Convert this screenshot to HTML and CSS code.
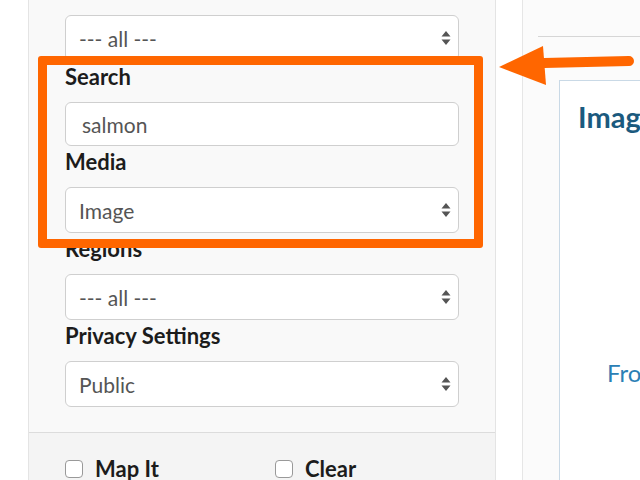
FILE: index.html
```html
<!DOCTYPE html>
<html lang="en">
<head>
  <meta charset="UTF-8" />
  <meta name="viewport" content="width=device-width, initial-scale=1" />
  <title>Filter Observations</title>
  <link rel="stylesheet" href="styles.css">
</head>
<body>

  <div class="page">
    <div class="gutter"></div>

    <aside class="filters">
      <div class="filter-fields">
        <div class="select-wrap">
          <select class="field"><option>--- all ---</option></select>
          <svg class="updown" width="10" height="16" viewBox="0 0 10 16"><path d="M5 1 L9.5 6.5 H0.5 Z M5 15 L9.5 9.5 H0.5 Z" fill="#555"/></svg>
        </div>

        <label for="search">Search</label>
        <input type="text" id="search" class="field" value="salmon" />

        <label for="media">Media</label>
        <div class="select-wrap">
          <select id="media" class="field"><option>Image</option></select>
          <svg class="updown" width="10" height="16" viewBox="0 0 10 16"><path d="M5 1 L9.5 6.5 H0.5 Z M5 15 L9.5 9.5 H0.5 Z" fill="#555"/></svg>
        </div>

        <label for="regions">Regions</label>
        <div class="select-wrap">
          <select id="regions" class="field"><option>--- all ---</option></select>
          <svg class="updown" width="10" height="16" viewBox="0 0 10 16"><path d="M5 1 L9.5 6.5 H0.5 Z M5 15 L9.5 9.5 H0.5 Z" fill="#555"/></svg>
        </div>

        <label for="privacy">Privacy Settings</label>
        <div class="select-wrap">
          <select id="privacy" class="field"><option>Public</option></select>
          <svg class="updown" width="10" height="16" viewBox="0 0 10 16"><path d="M5 1 L9.5 6.5 H0.5 Z M5 15 L9.5 9.5 H0.5 Z" fill="#555"/></svg>
        </div>
      </div>

      <div class="filter-actions">
        <label class="check"><input type="checkbox" /> Map It</label>
        <label class="check"><input type="checkbox" /> Clear</label>
      </div>

      <div class="highlight"></div>
    </aside>

    <div class="spacer"></div>

    <main class="results">
      <div class="results-rule"></div>
      <div class="result-card">
        <h3>Images</h3>
        <p class="from">From</p>
      </div>
    </main>

    <svg class="pointer" width="140" height="50" viewBox="0 0 140 50">
      <line x1="45" y1="18" x2="130" y2="16" stroke="#ff6600" stroke-width="10" stroke-linecap="round"/>
      <polygon points="0,22 44,1 47,40" fill="#ff6600"/>
    </svg>
  </div>

</body>
</html>
```

FILE: styles.css
```css
body {
  margin: 0;
  font-family: Lato, "Open Sans", sans-serif;
  background: #fff;
  color: #222;
}
.page {
  display: flex;
  height: 480px;
  overflow: hidden;
  position: relative;
}
.gutter {
  width: 28px;
  flex: none;
}
.filters {
  width: 466px;
  flex: none;
  border-left: 1px solid #e4e4e4;
  border-right: 1px solid #e4e4e4;
  background: #f9f9f9;
  display: flex;
  flex-direction: column;
  position: relative;
}
.filter-fields {
  padding: 15px 0 0 36px;
  height: 433px;
  flex: none;
  box-sizing: border-box;
  border-bottom: 1px solid #dcdcdc;
}
.filters label {
  display: block;
  font-size: 22px;
  font-weight: bold;
  line-height: 24px;
  margin: 4px 0 13px;
  color: #1c1c1c;
}
.select-wrap {
  position: relative;
  width: 394px;
}
.field {
  display: block;
  width: 394px;
  height: 46px;
  box-sizing: border-box;
  border: 1px solid #cfcfcf;
  border-radius: 6px;
  background: #fff;
  padding: 0 13px;
  font-family: Lato, "Open Sans", sans-serif;
  font-size: 21px;
  color: #555;
  appearance: none;
  -webkit-appearance: none;
}
input.field {
  height: 44px;
  padding-left: 16px;
}
.updown {
  position: absolute;
  right: 8px;
  top: 15px;
}
.filter-actions {
  flex: 1;
  background: #f4f4f4;
  display: flex;
  padding: 24px 0 0 36px;
}
.filter-actions .check {
  display: flex;
  align-items: center;
  gap: 12px;
  margin: 0;
  width: 210px;
  height: 24px;
}
.check input {
  appearance: none;
  -webkit-appearance: none;
  width: 18px;
  height: 18px;
  margin: 0;
  border: 1px solid #999;
  border-radius: 4px;
  background: #fff;
}
.highlight {
  position: absolute;
  left: 9px;
  top: 56px;
  width: 445px;
  height: 192px;
  box-sizing: border-box;
  border: 9px solid #ff6600;
  border-radius: 3px;
}
.spacer {
  width: 26px;
  flex: none;
  border-right: 1px solid #e6e6e6;
}
.results {
  flex: 1;
  background: #fbfbfb;
  padding: 36px 0 0 15px;
  overflow: hidden;
}
.results-rule {
  border-top: 1px solid #d6d6d6;
  margin-bottom: 43px;
}
.result-card {
  margin-left: 21px;
  height: 420px;
  border: 1px solid #c9d9e6;
  border-right: none;
  background: #fff;
  padding: 18px 0 0 18px;
  white-space: nowrap;
  overflow: hidden;
}
.result-card h3 {
  margin: 0;
  font-size: 29px;
  font-weight: bold;
  color: #1b5a7e;
}
.from {
  margin: 224px 0 0 29px;
  font-size: 24px;
  color: #2b80b5;
}
.pointer {
  position: absolute;
  left: 499px;
  top: 45px;
}
```
